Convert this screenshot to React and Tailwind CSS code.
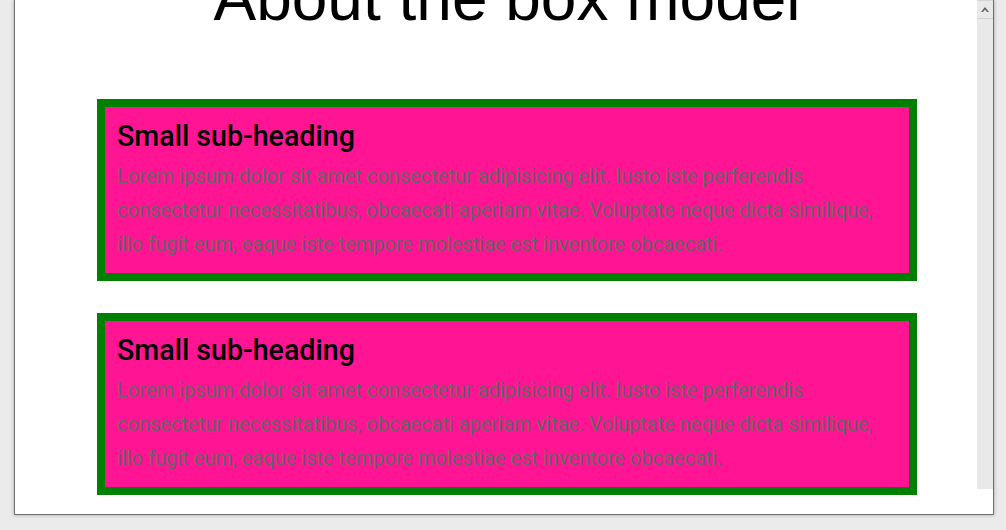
import React from 'react';

const lines = [
  'Lorem ipsum dolor sit amet consectetur adipisicing elit. Iusto iste perferendis',
  'consectetur necessitatibus, obcaecati aperiam vitae. Voluptate neque dicta similique,',
  'illo fugit eum, eaque iste tempore molestiae est inventore obcaecati.',
];

const Card = () => (
  <div className="border-8 border-[#008000] bg-[#ff1493] h-[182px] px-3 pt-3">
    <h2 className="text-[28.6px] leading-[34px] font-medium text-black" style={{ fontFamily: 'Roboto, sans-serif' }}>
      Small sub-heading
    </h2>
    <p className="mt-[6px] text-[20px] leading-[34px] text-[#666] whitespace-nowrap" style={{ fontFamily: 'Roboto, sans-serif' }}>
      {lines.map((l, i) => (
        <React.Fragment key={i}>
          {l}
          {i < lines.length - 1 && <br />}
        </React.Fragment>
      ))}
    </p>
  </div>
);

const App = () => {
  return (
    <div className="w-[1006px] h-[530px] bg-[#ebebeb] overflow-hidden pl-[14px]">
      <div className="w-[980px] h-[515px] flex border-l border-r border-b border-[#6e6e6e] shadow-[0_0_4px_rgba(0,0,0,0.3)]">
        <div className="flex-1 bg-white overflow-hidden pl-[82px]">
          <div className="w-[820px]">
            <h1
              className="mt-[-34px] text-[64px] leading-[64px] text-center text-black"
              style={{ fontFamily: '"Liberation Sans", Arial, sans-serif' }}
            >
              About the box model
            </h1>
            <div className="mt-[69px] flex flex-col gap-8">
              <Card />
              <Card />
            </div>
          </div>
        </div>
        <div className="w-[16px] flex flex-col bg-white">
          <div className="h-[19px] bg-[#e9e9e9] border-t border-[#d6d6d6] border-b border-b-[#cfcfcf] flex items-center justify-center">
            <svg width="8" height="5" viewBox="0 0 8 5">
              <path d="M0 5 L4 0 L8 5 L6 5 L4 2.5 L2 5 Z" fill="#606060" />
            </svg>
          </div>
          <div className="h-[470px] bg-[#e9e9e9]" />
          <div className="flex-1 bg-white" />
        </div>
      </div>
    </div>
  );
};

export default App;
